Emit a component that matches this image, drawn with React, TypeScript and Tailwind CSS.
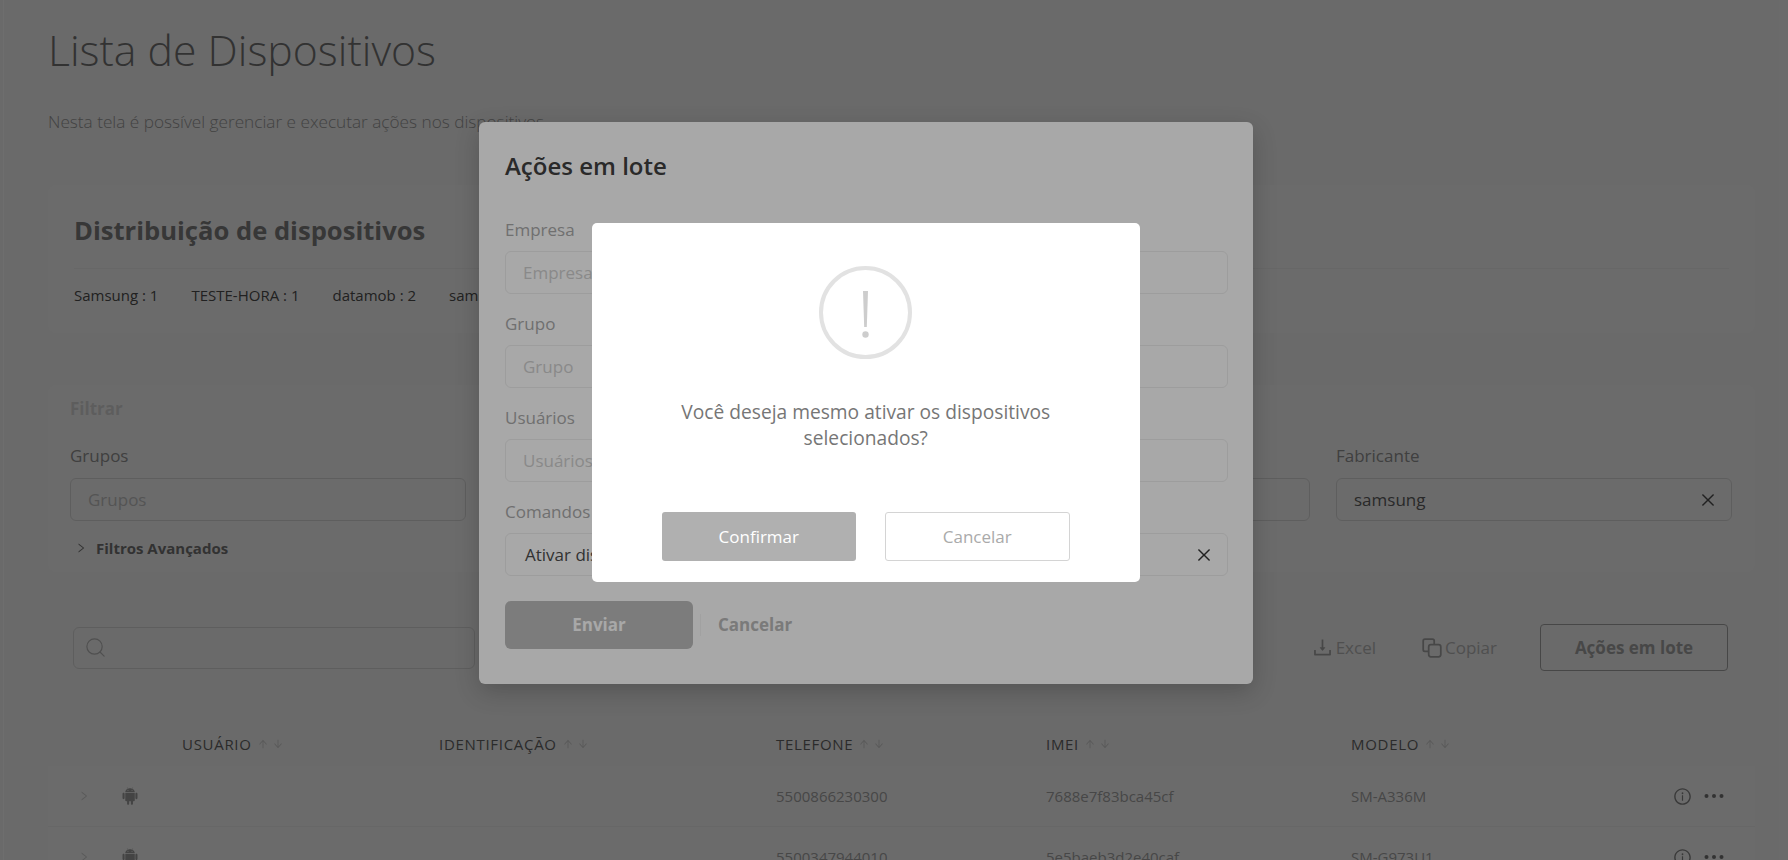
import { AiFillAndroid, AiOutlineArrowDown, AiOutlineArrowUp, AiOutlineClose, AiOutlineDownload, AiOutlineInfoCircle, AiOutlineRight } from 'react-icons/ai';
import { Search } from 'lucide-react';

const FONT = "font-['Open_Sans',sans-serif]";

const Sort = () => (
  <span className="ml-[5px] inline-flex items-center gap-[3px] text-[#cfcfcf]">
    <AiOutlineArrowUp size={12} />
    <AiOutlineArrowDown size={12} />
  </span>
);

const Dots = () => (
  <svg width="20" height="6" viewBox="0 0 20 6" fill="#757575">
    <circle cx="2.5" cy="3" r="2" />
    <circle cx="10" cy="3" r="2" />
    <circle cx="17.5" cy="3" r="2" />
  </svg>
);

const FilterField = ({ label, value }: { label: string; value?: string }) => (
  <div>
    <div className="text-[17px] leading-[24px] text-[#939393]">{label}</div>
    <div className="mt-[10px] flex h-[43px] items-center justify-between rounded-[6px] border border-[#dadada] pl-[17px] pr-[14px] text-[17px]">
      {value ? <span className="text-[#606060]">{value}</span> : <span className="text-[#c3c3c3]">{label}</span>}
      {value && <AiOutlineClose size={18} className="text-[#4e4e4e]" />}
    </div>
  </div>
);

const ModalField = ({ label, value }: { label: string; value?: string }) => (
  <div className="mb-[18px]">
    <div className="text-[17px] leading-[24px] text-[#aaaaaa]">{label}</div>
    <div className="mt-[9px] flex h-[43px] items-center justify-between rounded-[6px] border border-[#eeeeee] pl-[17px] pr-[14px] text-[17px]">
      {value ? <span className="pl-[2px] text-[#4c4c4c]">{value}</span> : <span className="text-[#d1d1d1]">{label}</span>}
      {value && <AiOutlineClose size={18} className="text-[#333333]" />}
    </div>
  </div>
);

const rows = [
  { phone: '5500866230300', imei: '7688e7f83bca45cf', model: 'SM-A336M' },
  { phone: '5500347944010', imei: '5e5baeb3d2e40caf', model: 'SM-G973U1' },
];

const headers = ['USUÁRIO', 'IDENTIFICAÇÃO', 'TELEFONE', 'IMEI', 'MODELO'];

export default function App() {
  return (
    <div className={`${FONT} relative flex h-[860px] w-full overflow-hidden bg-[#f5f5f5]`}>
      <div className="w-[4px] shrink-0 border-r border-[#ffffff]" />

      <main className="min-w-0 flex-1 pl-[44px] pr-[33px] pt-[25px]">
        <h1 className="text-[42.75px] font-light leading-[50px] text-[#757575]">Lista de Dispositivos</h1>
        <p className="mt-[35px] text-[17.2px] font-light leading-[24px] text-[#999999]">
          Nesta tela é possível gerenciar e executar ações nos dispositivos.
        </p>

        {/* Distribuição */}
        <section className="mt-[51px] h-[148px] rounded-[8px] bg-[#f8f8f8] px-[26px] pt-[30px]">
          <h2 className="border-b border-[#eeeeee] pb-[21px] text-[25.6px] font-bold leading-[32px] text-[#808080]">
            Distribuição de dispositivos
          </h2>
          <div className="mt-[16px] flex gap-[33px] text-[15px] leading-[20px] text-[#4e4e4e]">
            <span>Samsung : 1</span>
            <span>TESTE-HORA : 1</span>
            <span>datamob : 2</span>
            <span>samsung : 1</span>
          </div>
        </section>

        {/* Filtros */}
        <section className="mt-[52px] rounded-[8px] bg-[#f8f8f8] pb-[14px] pl-[22px] pr-[23px] pt-[12px]">
          <div className="text-[17px] font-bold leading-[24px] text-[#d8d8d8]">Filtrar</div>
          <div className="mt-[23px] grid grid-cols-4 gap-[26px]">
            <FilterField label="Grupos" />
            <FilterField label="Usuários" />
            <FilterField label="Modelo" />
            <FilterField label="Fabricante" value="samsung" />
          </div>
          <div className="mt-[17px] flex items-center gap-[9px] pl-[5px] text-[15px] font-bold leading-[20px] text-[#757575]">
            <AiOutlineRight size={12} />
            <span>Filtros Avançados</span>
          </div>
        </section>

        {/* Barra de ações */}
        <div className="mt-[52px] flex h-[47px] items-center pl-[25px] pr-[27px]">
          <div className="flex h-[42px] w-[402px] items-center rounded-[6px] border border-[#dadada] pl-[10px]">
            <Search size={23} strokeWidth={1.25} className="text-[#b8b8b8]" />
          </div>
          <div className="ml-auto flex items-center text-[17px] text-[#b8b8b8]">
            <span className="flex items-center gap-[2px]">
              <AiOutlineDownload size={23} className="text-[#a5a5a5]" />
              Excel
            </span>
            <span className="ml-[45px] flex items-center gap-[2px]">
              <svg width="22" height="22" viewBox="0 0 20 20" fill="none" stroke="#a5a5a5" strokeWidth="1.6">
                <path d="M7 13H3.5A1.5 1.5 0 0 1 2 11.5V3.5A1.5 1.5 0 0 1 3.5 2h7A1.5 1.5 0 0 1 12 3.5V7" />
                <rect x="7" y="7" width="11" height="11" rx="2" />
              </svg>
              Copiar
            </span>
            <button className="ml-[43px] h-[47px] w-[188px] rounded-[4px] border border-[#a5a5a5] font-bold text-[#a5a5a5]">
              Ações em lote
            </button>
          </div>
        </div>

        {/* Tabela */}
        <div className="mt-[63px] grid h-[32px] grid-cols-[134px_257px_337px_270px_305px_1fr] text-[15px] leading-[20px] tracking-[0.7px] text-[#656565]">
          <div />
          {headers.map((h) => (
            <div key={h} className="flex h-[20px] items-center">
              {h}
              <Sort />
            </div>
          ))}
        </div>
        {rows.map((r) => (
          <div
            key={r.phone}
            className="grid h-[61px] grid-cols-[134px_257px_337px_270px_305px_1fr] items-center border-b border-[#eeeeee] bg-[#f8f8f8] text-[15px] text-[#a5a5a5]"
          >
            <div className="flex items-center pl-[30px]">
              <AiOutlineRight size={12} className="text-[#cfcfcf]" />
              <AiFillAndroid size={20} className="ml-[30px] text-[#9f9f9f]" />
            </div>
            <div />
            <div />
            <div>{r.phone}</div>
            <div>{r.imei}</div>
            <div className="flex items-center justify-between pr-[31px]">
              <span>{r.model}</span>
              <span className="flex items-center gap-[12px]">
                <AiOutlineInfoCircle size={19} className="text-[#858585]" />
                <Dots />
              </span>
            </div>
          </div>
        ))}
      </main>

      {/* Modal de ações em lote */}
      <div className="absolute inset-0 bg-black/[0.34]">
        <div className="ml-[479px] mt-[122px] w-[773.5px] rounded-[6px] bg-white pb-[35px] pl-[26px] pr-[24.5px] pt-[28px] shadow-[0_8px_24px_rgba(0,0,0,0.2)]">
          <h3 className="mb-[36px] text-[24px] font-semibold leading-[32px] text-[#404040]">Ações em lote</h3>
          <ModalField label="Empresa" />
          <ModalField label="Grupo" />
          <ModalField label="Usuários" />
          <ModalField label="Comandos" value="Ativar dispositivos" />
          <div className="mt-[25px] flex items-center">
            <button className="h-[48px] w-[188px] rounded-[6px] bg-[#bcbcbc] text-[17px] font-bold text-white">Enviar</button>
            <div className="ml-[7px] h-[22px] w-px bg-[#f4f4f4]" />
            <button className="ml-[17px] text-[17px] font-bold text-[#b9b9b9]">Cancelar</button>
          </div>
        </div>
      </div>

      {/* Confirmação */}
      <div className="absolute inset-0 bg-black/[0.34]">
        <div className="ml-[592px] mt-[223px] w-[547.5px] rounded-[5px] bg-white pb-[21px] pt-[43px]">
          <svg className="mx-auto block" width="93" height="93" viewBox="0 0 93 93" fill="none">
            <circle cx="46.5" cy="46.5" r="44.5" stroke="#e2e2e2" strokeWidth="4" />
            <path d="M44 25h5l-1.2 36h-2.6z" fill="#cdcdcd" />
            <circle cx="46.5" cy="68.5" r="3.2" fill="#cdcdcd" />
          </svg>
          <p className="mx-auto mt-[40px] w-[440px] text-center text-[19.2px] leading-[26px] text-[#767676]">
            Você deseja mesmo ativar os dispositivos selecionados?
          </p>
          <div className="mt-[61px] flex justify-center gap-[29px]">
            <button className="h-[49px] w-[194px] rounded-[3px] bg-[#b0b0b0] text-[17px] text-white">Confirmar</button>
            <button className="h-[49px] w-[185px] rounded-[3px] border border-[#d4d4d4] text-[17px] text-[#aaaaaa]">Cancelar</button>
          </div>
        </div>
      </div>
    </div>
  );
}
